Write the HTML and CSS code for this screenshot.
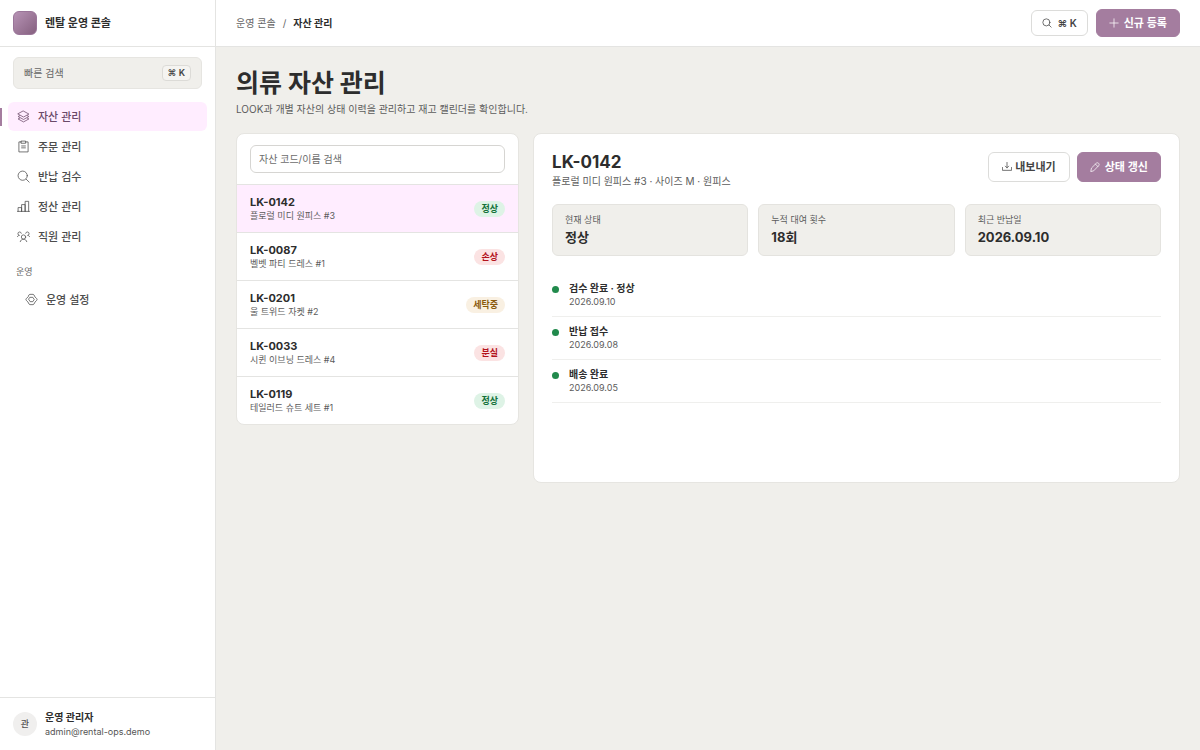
FILE: index.html
```html
<!DOCTYPE html>
<html lang="ko">
<head>
    <meta charset="UTF-8">
    <meta name="viewport" content="width=device-width, initial-scale=1.0">
    <title>자산 관리 - 렌탈 운영 콘솔</title>
    <link rel="stylesheet" href="styles.css">
</head>
<body>
    <div class="app">
        <aside class="sidebar">
            <div class="brand">
                <span class="brand-mark"></span>
                <strong>렌탈 운영 콘솔</strong>
            </div>
            <button type="button" class="quick-search">
                <span>빠른 검색</span>
                <kbd>⌘ K</kbd>
            </button>
            <nav class="menu">
                <a href="#" class="menu-item active">
                    <svg class="icon" viewBox="0 0 24 24"><path d="M12 2 22 7.500 12 13 2 7.500z"/><path d="M5 10.500 2 12l10 5.500L22 12l-3-1.500"/><path d="M5 15 2 16.500 12 22l10-5.500-3-1.500"/></svg>
                    자산 관리
                </a>
                <a href="#" class="menu-item">
                    <svg class="icon" viewBox="0 0 24 24"><path d="M8 3.500H3.500V22h17V3.500H16"/><path d="M8 2h8v4H8zM8.500 11h7M8.500 14.500h7"/></svg>
                    주문 관리
                </a>
                <a href="#" class="menu-item">
                    <svg class="icon" viewBox="0 0 24 24"><circle cx="10.500" cy="10.500" r="8.500"/><path d="m17 17 5.500 5.500"/></svg>
                    반납 검수
                </a>
                <a href="#" class="menu-item">
                    <svg class="icon" viewBox="0 0 24 24"><path d="M2 21v-7h6.500v7M8.500 21V8.500H15V21M15 21V2.500h6.500V21M1 21h22"/></svg>
                    정산 관리
                </a>
                <a href="#" class="menu-item">
                    <svg class="icon" viewBox="0 0 24 24"><circle cx="12" cy="13" r="4"/><path d="M6 21.500c.8-2.800 3-4.500 6-4.500s5.200 1.700 6 4.500"/><path d="M8 6A3.200 3.200 0 1 0 4.500 10C2.800 10 1.500 11 .5 12.500M16 6a3.200 3.200 0 1 1 3.500 4c1.700 0 3 1 4 2.500"/></svg>
                    직원 관리
                </a>
                <p class="menu-title">운영</p>
                <a href="#" class="menu-item sub">
                    <svg class="icon" viewBox="0 0 24 24"><path d="M7.500 3.500 9 2.500h6l1.500 1 2 3.800 3.200 3.200c.8 1 .8 2 0 3l-3.200 3.200-2 3.800-1.500 1H9l-1.500-1-2-3.800-3.200-3.200c-.8-1-.8-2 0-3l3.200-3.200z"/><path d="M9.500 8h5l2.500 4-2.500 4h-5L7 12z"/></svg>
                    운영 설정
                </a>
            </nav>
            <div class="account">
                <span class="avatar">관</span>
                <div>
                    <strong>운영 관리자</strong>
                    <span>admin@rental-ops.demo</span>
                </div>
            </div>
        </aside>

        <div class="main">
            <header class="topbar">
                <nav class="breadcrumb">
                    <a href="#">운영 콘솔</a>
                    <span>/</span>
                    <strong>자산 관리</strong>
                </nav>
                <div class="actions">
                    <button type="button" class="btn btn-key">
                        <svg class="icon" viewBox="0 0 24 24"><circle cx="10.500" cy="10.500" r="8.500"/><path d="m17 17 5 5"/></svg>
                        ⌘ K
                    </button>
                    <button type="button" class="btn btn-primary">
                        <svg class="icon" viewBox="0 0 24 24"><path d="M12 2v20M2 12h20"/></svg>
                        신규 등록
                    </button>
                </div>
            </header>

            <main class="content">
                <h1>의류 자산 관리</h1>
                <p class="lead">LOOK과 개별 자산의 상태 이력을 관리하고 재고 캘린더를 확인합니다.</p>

                <div class="columns">
                    <section class="card">
                        <div class="filter">
                            <input type="text" placeholder="자산 코드/이름 검색" aria-label="자산 코드/이름 검색">
                        </div>
                        <ul class="assets">
                            <li>
                                <a href="#" class="asset selected">
                                    <span class="asset-text"><strong>LK-0142</strong><span>플로럴 미디 원피스 #3</span></span>
                                    <span class="badge ok">정상</span>
                                </a>
                            </li>
                            <li>
                                <a href="#" class="asset">
                                    <span class="asset-text"><strong>LK-0087</strong><span>벨벳 파티 드레스 #1</span></span>
                                    <span class="badge danger">손상</span>
                                </a>
                            </li>
                            <li>
                                <a href="#" class="asset">
                                    <span class="asset-text"><strong>LK-0201</strong><span>울 트위드 자켓 #2</span></span>
                                    <span class="badge warn">세탁중</span>
                                </a>
                            </li>
                            <li>
                                <a href="#" class="asset">
                                    <span class="asset-text"><strong>LK-0033</strong><span>시퀸 이브닝 드레스 #4</span></span>
                                    <span class="badge danger">분실</span>
                                </a>
                            </li>
                            <li>
                                <a href="#" class="asset">
                                    <span class="asset-text"><strong>LK-0119</strong><span>테일러드 슈트 세트 #1</span></span>
                                    <span class="badge ok">정상</span>
                                </a>
                            </li>
                        </ul>
                    </section>

                    <section class="card detail">
                        <div class="detail-head">
                            <div>
                                <h2>LK-0142</h2>
                                <p>플로럴 미디 원피스 #3 · 사이즈 M · 원피스</p>
                            </div>
                            <div class="actions">
                                <button type="button" class="btn btn-large btn-export">
                                    <svg class="icon" viewBox="0 0 24 24"><path d="M12 1v13M8 10l4 4 4-4M1 13v7h22v-7"/></svg>
                                    내보내기
                                </button>
                                <button type="button" class="btn btn-large btn-primary">
                                    <svg class="icon" viewBox="0 0 24 24"><path d="M2 22l1.500-7.500L15 3c2-2 4.500-1 5.500 0s2.500 3.500.5 5.500L9.500 20.500zM13 5l6 6"/></svg>
                                    상태 갱신
                                </button>
                            </div>
                        </div>
                        <dl class="stats">
                            <div><dt>현재 상태</dt><dd>정상</dd></div>
                            <div><dt>누적 대여 횟수</dt><dd>18회</dd></div>
                            <div><dt>최근 반납일</dt><dd>2026.09.10</dd></div>
                        </dl>
                        <ol class="history">
                            <li><strong>검수 완료 · 정상</strong><time>2026.09.10</time></li>
                            <li><strong>반납 접수</strong><time>2026.09.08</time></li>
                            <li><strong>배송 완료</strong><time>2026.09.05</time></li>
                        </ol>
                    </section>
                </div>
            </main>
        </div>
    </div>
</body>
</html>
```
FILE: styles.css
```css
* {
    box-sizing: border-box;
}
body {
    margin: 0;
    font-family: Inter, "Noto Sans CJK KR", sans-serif;
    font-size: 10px;
    line-height: 14px;
    color: #2d2d2d;
    background-color: #f0efeb;
}
h1, h2, p, ul, ol, dl, dd {
    margin: 0;
    padding: 0;
}
ul, ol {
    list-style: none;
}
a {
    color: inherit;
    text-decoration: none;
}
button, input, kbd {
    font: inherit;
    color: inherit;
}
.icon {
    width: 13px;
    height: 13px;
    flex: none;
    fill: none;
    stroke: currentColor;
    stroke-width: 2;
    stroke-linejoin: round;
    stroke-linecap: round;
}
.app {
    display: flex;
    min-height: 100vh;
}

/* sidebar */
.sidebar {
    display: flex;
    flex-direction: column;
    width: 216px;
    flex: none;
    background-color: #fff;
    border-right: 1px solid #e4e4e2;
}
.brand {
    display: flex;
    align-items: center;
    gap: 8px;
    height: 47px;
    padding: 0 13px;
    border-bottom: 1px solid #e4e4e2;
    font-size: 11px;
}
.brand-mark {
    width: 24px;
    height: 24px;
    border-radius: 6px;
    border: 1px solid #9a7599;
    background: linear-gradient(135deg, #b793b5, #85607f);
}
.quick-search {
    display: flex;
    align-items: center;
    justify-content: space-between;
    height: 32px;
    margin: 10px 13px 11px;
    padding: 0 10px;
    border: 1px solid #e6e5e1;
    border-radius: 6px;
    background-color: #f0efeb;
    color: #666;
    cursor: pointer;
}
.quick-search kbd {
    padding: 0 5px;
    border: 1px solid #dcdbd7;
    border-radius: 4px;
    background-color: #f5f4f1;
    color: #444;
    font-size: 9px;
    font-weight: 600;
}
.menu {
    flex: 1;
    padding: 2px 8px;
}
.menu-item {
    display: flex;
    align-items: center;
    gap: 8px;
    height: 29px;
    margin-bottom: 1px;
    padding: 0 9px;
    border-radius: 6px;
    color: #4c4c4c;
    font-size: 11px;
    font-weight: 500;
}
.menu-item.active {
    position: relative;
    background-color: #ffedff;
    color: #6b4a69;
}
.menu-item.active::before {
    content: "";
    position: absolute;
    left: -8px;
    top: 6px;
    width: 2px;
    height: 18px;
    background-color: #a47d9f;
}
.menu-item.sub {
    margin-left: 8px;
}
.menu .icon {
    stroke-width: 1.4;
}
.menu-title {
    margin: 14px 8px 6px;
    color: #666;
    font-size: 9px;
}
.account {
    display: flex;
    align-items: center;
    gap: 8px;
    height: 53px;
    padding: 0 13px;
    border-top: 1px solid #e4e4e2;
}
.account strong, .account div span {
    display: block;
}
.account strong {
    margin-bottom: 1px;
}
.account div span {
    color: #555;
    font-size: 9px;
}
.avatar {
    width: 24px;
    height: 24px;
    border-radius: 50%;
    background-color: #f0efee;
    color: #505050;
    font-size: 9px;
    font-weight: 500;
    line-height: 24px;
    text-align: center;
}

/* top bar */
.main {
    flex: 1;
    min-width: 0;
}
.topbar {
    display: flex;
    align-items: center;
    justify-content: space-between;
    height: 47px;
    padding: 0 20px;
    background-color: #fff;
    border-bottom: 1px solid #e4e4e2;
}
.breadcrumb {
    display: flex;
    gap: 7px;
    color: #666;
}
.breadcrumb strong {
    color: #2d2d2d;
}
.actions {
    display: flex;
    align-items: center;
    gap: 8px;
}
.btn {
    display: flex;
    align-items: center;
    gap: 5px;
    height: 28px;
    padding: 0 12px;
    border: 1px solid #a47d9f;
    border-radius: 6px;
    font-size: 11px;
    font-weight: 600;
    cursor: pointer;
}
.btn .icon {
    width: 10px;
    height: 10px;
    stroke-width: 1.8;
}
.btn-primary {
    background-color: #a47d9f;
    color: #fff;
}
.btn-key, .btn-export {
    background-color: #fff;
    border-color: #dcdcda;
    color: #444;
}
.btn-key {
    height: 26px;
    padding: 0 10px;
    font-size: 10px;
}
.btn-export {
    gap: 3px;
    padding: 0 13px;
}
.btn-large {
    height: 30px;
}

/* content */
.content {
    padding: 18px 20px;
}
h1 {
    font-size: 25px;
    line-height: 36px;
}
.lead {
    margin-bottom: 16px;
    line-height: 16px;
    color: #5c5c5c;
}
.columns {
    display: grid;
    grid-template-columns: minmax(0, 7fr) minmax(0, 16fr);
    gap: 14px;
    align-items: start;
}
.card {
    border: 1px solid #e6e5e1;
    border-radius: 8px;
    background-color: #fff;
    overflow: hidden;
}
.filter {
    padding: 11px 13px;
}
.filter input {
    display: block;
    width: 100%;
    height: 28px;
    padding: 0 8px;
    border: 1px solid #d6d5d2;
    border-radius: 6px;
    background-color: #fff;
}
.filter input::placeholder {
    color: #6c6c6c;
    opacity: 1;
}
.asset {
    display: flex;
    align-items: center;
    justify-content: space-between;
    padding: 11px 13px 10px;
    border-top: 1px solid #e4e4e2;
}
.asset.selected {
    background-color: #ffedff;
}
.asset-text strong, .asset-text span {
    display: block;
    line-height: 13px;
}
.asset-text strong {
    font-size: 11px;
}
.asset-text span {
    color: #5c5c5c;
    font-size: 9px;
}
.badge {
    padding: 1px 7px;
    border-radius: 8px;
    font-size: 9px;
    font-weight: 700;
}
.badge.ok {
    background-color: #def3e6;
    color: #14713a;
}
.badge.danger {
    background-color: #fbe3e3;
    color: #b3141d;
}
.badge.warn {
    background-color: #f9f0e2;
    color: #8a5a0c;
}

/* detail */
.detail {
    min-height: 350px;
    padding: 18px;
}
.detail-head {
    display: flex;
    justify-content: space-between;
    margin-bottom: 14px;
}
.detail-head h2 {
    font-size: 17px;
    line-height: 20px;
}
.detail-head p {
    line-height: 18px;
    color: #5c5c5c;
}
.detail-head .actions {
    gap: 7px;
    height: 30px;
}
.stats {
    display: grid;
    grid-template-columns: repeat(3, 1fr);
    gap: 10px;
    margin-bottom: 18px;
}
.stats div {
    padding: 8px 12px;
    border: 1px solid #e4e3df;
    border-radius: 6px;
    background-color: #f0efeb;
}
.stats dt {
    color: #5c5c5c;
    font-size: 9px;
}
.stats dd {
    font-size: 13px;
    font-weight: 700;
    line-height: 20px;
}
.history li {
    position: relative;
    padding: 8px 0 8px 17px;
    border-bottom: 1px solid #efefed;
}
.history li::before {
    content: "";
    position: absolute;
    left: 0;
    top: 12px;
    width: 7px;
    height: 7px;
    border-radius: 50%;
    background-color: #218a4c;
}
.history strong, .history time {
    display: block;
    line-height: 13px;
}
.history time {
    color: #5c5c5c;
    font-size: 9px;
}
```
